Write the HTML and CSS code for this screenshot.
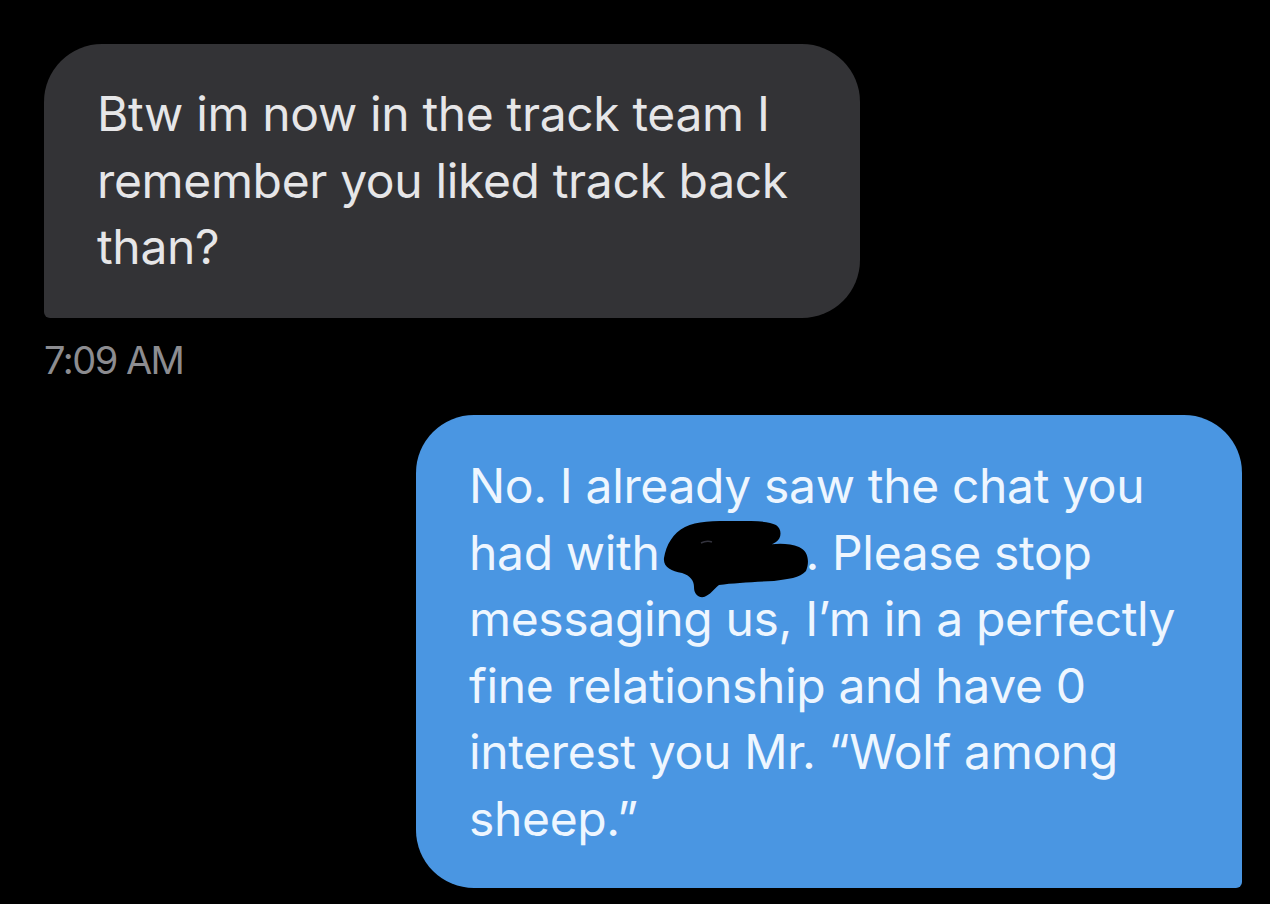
FILE: index.html
```html
<!DOCTYPE html>
<html lang="en">
<head>
<meta charset="utf-8">
<title>Messages</title>
<link rel="stylesheet" href="styles.css">
</head>
<body>
<main class="thread">
  <div class="msg msg-in">
    <div class="bubble bubble-in">Btw im now in the track team I<br>remember you liked track back<br>than?</div>
    <div class="time">7:09 AM</div>
  </div>
  <div class="msg msg-out">
    <div class="bubble bubble-out">No. I already saw the chat you<br>had with<span class="redact"><svg class="scribble" width="150" height="80" viewBox="0 0 150 80" aria-hidden="true"><path d="M1 37 C3 24 10 12 22 6 C34 0 50 0 72 0 C92 0 106 0 113 4 C119 8 119 17 113 21 C109 24 105 24 101 25 C111 22 126 22 136 26 C145 30 147 40 143 50 C137 57 125 58 111 60 C91 61 71 62 56 64 C51 68 47 74 41 76 C34 77 31 72 31 66 C31 60 28 55 19 52 C8 50 0 46 1 37 Z" fill="#000"/><path d="M38 22 C42 20 46 20 49 21" stroke="#556" stroke-width="1.5" fill="none" opacity=".6"/></svg></span>. Please stop<br>messaging us, I’m in a perfectly<br>fine relationship and have 0<br>interest you Mr. “Wolf among<br>sheep.”</div>
  </div>
</main>
</body>
</html>
```
FILE: styles.css
```css
html, body {
  margin: 0;
  padding: 0;
  background: #000;
}
body {
  width: 1270px;
  height: 904px;
  overflow: hidden;
  font-family: Inter, "Liberation Sans", sans-serif;
  -webkit-font-smoothing: antialiased;
}
.thread {
  display: flex;
  flex-direction: column;
  padding: 44px 28px 0 44px;
}
.msg {
  display: flex;
  flex-direction: column;
}
.msg-in {
  align-items: flex-start;
}
.msg-out {
  align-items: flex-end;
  margin-top: 33px;
}
.bubble {
  box-sizing: border-box;
  font-size: 48px;
  line-height: 66.5px;
  letter-spacing: -0.35px;
  white-space: nowrap;
}
.bubble-in {
  width: 816px;
  height: 274px;
  padding: 37px 40px 0 53px;
  background: #333336;
  color: #e6e6e8;
  border-radius: 58px 58px 58px 6px;
}
.bubble-out {
  width: 826px;
  height: 473px;
  padding: 38px 40px 0 53px;
  background: #4a96e2;
  color: #eef6ff;
  border-radius: 58px 58px 6px 58px;
}
.time {
  margin-top: 20px;
  font-size: 38px;
  line-height: 44px;
  color: #8c8c90;
  letter-spacing: -1.5px;
}
.redact {
  display: inline-block;
  position: relative;
  width: 146px;
  height: 0;
}
.scribble {
  position: absolute;
  left: 4px;
  top: -49px;
}
```
